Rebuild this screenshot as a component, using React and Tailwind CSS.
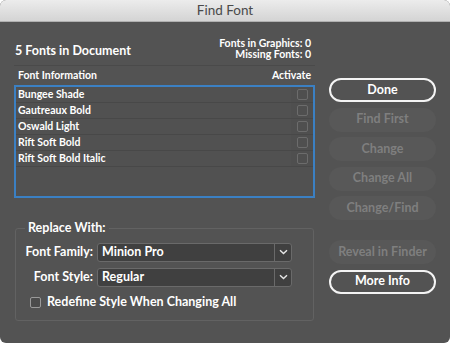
import React from "react";

const font = { fontFamily: "Lato, 'Open Sans', sans-serif" };

const fonts = ["Bungee Shade", "Gautreaux Bold", "Oswald Light", "Rift Soft Bold", "Rift Soft Bold Italic"];

function Btn({ children, primary }) {
  if (primary) {
    return (
      <div className="h-[24px] w-[107px] shrink-0 rounded-full border-2 border-[#f4f4f4] flex items-center justify-center text-[12.5px] font-bold text-white">
        {children}
      </div>
    );
  }
  return (
    <div className="h-[24px] w-[107px] shrink-0 rounded-full bg-[#585858] flex items-center justify-center text-[12.5px] font-bold text-[#7f7f7f]">
      {children}
    </div>
  );
}

function Chevron() {
  return (
    <svg width="9" height="6" viewBox="0 0 9 6" fill="none">
      <path d="M1 1.2 L4.5 4.6 L8 1.2" stroke="#e6e6e6" strokeWidth="1.4" />
    </svg>
  );
}

function Select({ value }) {
  return (
    <div className="flex h-[19px] w-[195px] rounded-[3px] border border-[#6a6a6a] bg-[#404040]">
      <div className="flex-1 flex items-center pl-[4px] text-[12.5px] font-bold text-white border-r border-[#6a6a6a]">{value}</div>
      <div className="w-[16px] flex items-center justify-center"><Chevron /></div>
    </div>
  );
}

export default function App() {
  return (
    <div className="w-[450px] h-[343px] bg-white" style={font}>
      <div className="w-full h-full rounded-[6px] overflow-hidden bg-[#535353] flex flex-col">
        <div className="h-[22px] shrink-0 bg-gradient-to-b from-[#ececec] to-[#d4d4d4] border-b border-[#b0b0b0] flex items-center justify-center text-[13.5px] text-[#4a4a4a]">
          Find Font
        </div>
        <div className="flex pl-[14px]">
          <div className="w-[301px] flex flex-col">
            <div className="mt-[16px] flex justify-between items-end pb-[5px] border-b border-[#4a4a4a]">
              <div className="ml-[1px] mb-[2px] text-[12.5px] leading-[14px] font-bold text-white">5 Fonts in Document</div>
              <div className="mr-[4px] text-right text-[10.5px] leading-[11px] font-bold text-white">
                <div>Fonts in Graphics: 0</div>
                <div>Missing Fonts: 0</div>
              </div>
            </div>
            <div className="h-[19px] flex items-center justify-between px-[4px] text-[10.5px] font-bold text-white">
              <span>Font Information</span>
              <span>Activate</span>
            </div>
            <div className="h-[113px] border-2 border-[#3b80c3] bg-[#515151]">
              {fonts.map((f) => (
                <div key={f} className="h-[16px] flex items-center border-b border-[#484848]">
                  <span className="flex-1 pl-[2px] text-[10.5px] font-bold text-white">{f}</span>
                  <div className="w-[22px] h-full flex items-center justify-center bg-[#4f4f4f]">
                    <div className="w-[11px] h-[11px] rounded-[2px] border border-[#6c6c6c]" />
                  </div>
                </div>
              ))}
            </div>
            <fieldset className="mt-[21px] ml-[1px] w-[299px] h-[102px] border border-[#626262] rounded-[3px] px-0">
              <legend className="ml-[9px] px-[3px] text-[12.5px] font-bold text-white">Replace With:</legend>
              <div className="flex flex-col gap-[6px] mt-[5px]">
                <div className="flex items-center">
                  <span className="w-[81px] text-right pr-[4px] text-[12.5px] font-bold text-white">Font Family:</span>
                  <Select value="Minion Pro" />
                </div>
                <div className="flex items-center">
                  <span className="w-[81px] text-right pr-[4px] text-[12.5px] font-bold text-white">Font Style:</span>
                  <Select value="Regular" />
                </div>
                <div className="flex items-center pl-[14px]">
                  <div className="w-[11px] h-[11px] rounded-[2px] border border-[#9a9a9a] bg-[#4c4c4c]" />
                  <span className="ml-[6px] text-[12.5px] font-bold text-white">Redefine Style When Changing All</span>
                </div>
              </div>
            </fieldset>
          </div>
          <div className="ml-[14px] pt-[56px] flex flex-col gap-[5.5px]">
            <Btn primary>Done</Btn>
            <Btn>Find First</Btn>
            <Btn>Change</Btn>
            <Btn>Change All</Btn>
            <Btn>Change/Find</Btn>
            <div className="h-[9px] shrink-0" />
            <Btn>Reveal in Finder</Btn>
            <Btn primary>More Info</Btn>
          </div>
        </div>
      </div>
    </div>
  );
}
